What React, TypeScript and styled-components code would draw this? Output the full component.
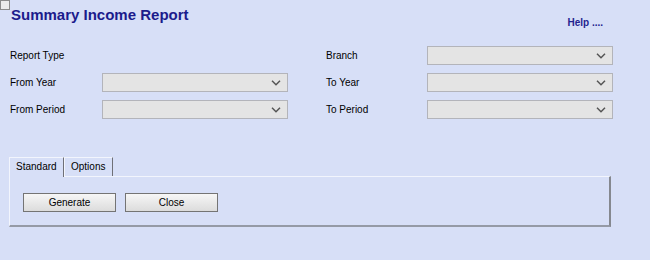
import React from "react";
import styled, { createGlobalStyle } from "styled-components";

const Global = createGlobalStyle`
  html, body {
    margin: 0;
    padding: 0;
    background: #d7dff7;
  }
  body {
    font-family: "Liberation Sans", Arial, sans-serif;
    width: 650px;
    height: 260px;
    overflow: hidden;
  }
`;

const Page = styled.div`
  position: relative;
  width: 650px;
  height: 260px;
  background: #d7dff7;
`;

const CornerBox = styled.div`
  position: absolute;
  top: 0;
  left: 0;
  width: 8px;
  height: 8px;
  border: 1px solid #8c8c8c;
  background: #ececec;
`;

const Header = styled.div`
  display: flex;
  justify-content: space-between;
  align-items: flex-start;
  padding: 6px 47px 0 11px;
`;

const Title = styled.h1`
  margin: 0;
  font-size: 15px;
  line-height: 18px;
  font-weight: bold;
  color: #1b1b8c;
`;

const Help = styled.a`
  margin-top: 11px;
  font-size: 10px;
  line-height: 12px;
  font-weight: bold;
  color: #23238f;
  text-decoration: none;
`;

const Form = styled.div`
  display: grid;
  grid-template-columns: 92px 224px 101px 186px;
  grid-auto-rows: 27px;
  margin: 13px 0 0 10px;
  align-items: center;
`;

const Label = styled.div`
  font-size: 10px;
  color: #000;
`;

const SelectBox = styled.div`
  position: relative;
  width: 186px;
  height: 19px;
  box-sizing: border-box;
  border: 1px solid #b3b4ba;
  background: #e4e4e4;
`;

const Chevron = styled.svg`
  position: absolute;
  right: 6px;
  top: 6px;
`;

const Select = () => (
  <SelectBox>
    <Chevron width="10" height="6" viewBox="0 0 10 6">
      <path d="M1 0.8 L5 4.8 L9 0.8" fill="none" stroke="#555" strokeWidth="1.5" />
    </Chevron>
  </SelectBox>
);

const Empty = styled.div``;

const Tabs = styled.div`
  margin: 34px 0 0 9px;
  width: 602px;
`;

const TabStrip = styled.div`
  display: flex;
  height: 19px;
  align-items: flex-start;
`;

const Tab = styled.div<{ $active?: boolean; $w: number }>`
  position: relative;
  z-index: 1;
  width: ${(p) => p.$w}px;
  height: ${(p) => (p.$active ? 20 : 19)}px;
  box-sizing: border-box;
  border-top: 1px solid #f2f5fd;
  border-left: 1px solid #f2f5fd;
  border-right: 1px solid #6f7077;
  background: #d7dff7;
  font-size: 10px;
  color: #000;
  padding: 3px 0 0 6px;
`;

const Panel = styled.div`
  box-sizing: border-box;
  height: 51px;
  border-top: 1px solid #f2f5fd;
  border-left: 1px solid #f2f5fd;
  border-right: 2px solid #85888f;
  border-bottom: 2px solid #959aa6;
  display: flex;
  gap: 9px;
  padding: 16px 0 0 13px;
`;

const Button = styled.button`
  width: 93px;
  height: 19px;
  box-sizing: border-box;
  border: 1px solid #747474;
  background: linear-gradient(#f6f6f6, #dcdcdc);
  font-family: "Liberation Sans", Arial, sans-serif;
  font-size: 10px;
  color: #000;
  padding: 0;
  cursor: pointer;
`;

export default function App() {
  return (
    <Page>
      <Global />
      <CornerBox />
      <Header>
        <Title>Summary Income Report</Title>
        <Help href="#">Help ....</Help>
      </Header>
      <Form>
        <Label>Report Type</Label>
        <Empty />
        <Label>Branch</Label>
        <Select />
        <Label>From Year</Label>
        <Select />
        <Label>To Year</Label>
        <Select />
        <Label>From Period</Label>
        <Select />
        <Label>To Period</Label>
        <Select />
      </Form>
      <Tabs>
        <TabStrip>
          <Tab $active $w={55}>Standard</Tab>
          <Tab $w={49}>Options</Tab>
        </TabStrip>
        <Panel>
          <Button>Generate</Button>
          <Button>Close</Button>
        </Panel>
      </Tabs>
    </Page>
  );
}
